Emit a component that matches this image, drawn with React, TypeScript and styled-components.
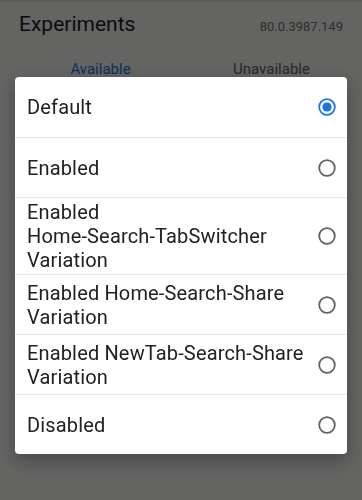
import React, { useState } from "react";
import styled, { createGlobalStyle } from "styled-components";

const GlobalStyle = createGlobalStyle`
  html, body {
    margin: 0;
    padding: 0;
    height: 100%;
  }
  body {
    font-family: Roboto, "Noto Sans", "Liberation Sans", sans-serif;
    background: #f9fcf8;
    overflow: hidden;
  }
`;

const Page = styled.div`
  width: 362px;
  height: 500px;
  background: #f9fcf8;
  border-top: 2px solid #e4e6e2;
  box-sizing: border-box;
`;

const Header = styled.header`
  display: flex;
  justify-content: space-between;
  align-items: baseline;
  padding: 10px 19px 0 19px;
`;

const Title = styled.h1`
  margin: 0;
  font-size: 21px;
  font-weight: 400;
  color: #202124;
`;

const Version = styled.span`
  font-size: 13px;
  color: #757575;
`;

const Tabs = styled.div`
  display: grid;
  grid-template-columns: 1fr 1fr;
  margin-top: 24px;
`;

const Tab = styled.div<{ $active?: boolean }>`
  text-align: center;
  font-size: 15px;
  color: ${({ $active }) => ($active ? "#1a73e8" : "#5f6368")};
  padding-left: ${({ $active }) => ($active ? "20px" : "0")};
`;

const Scrim = styled.div`
  position: fixed;
  inset: 0;
  background: rgba(0, 0, 0, 0.6);
`;

const Dialog = styled.div`
  position: fixed;
  top: 77px;
  left: 15px;
  width: 332px;
  background: #ffffff;
  border-radius: 4px;
  box-shadow: 0 6px 18px rgba(0, 0, 0, 0.35);
  overflow: hidden;
`;

const Row = styled.div<{ $tall?: boolean }>`
  display: flex;
  align-items: center;
  justify-content: space-between;
  gap: 10px;
  box-sizing: border-box;
  min-height: ${({ $tall }) => ($tall ? "76px" : "60px")};
  padding: 2px 10px 2px 12px;
  cursor: pointer;

  & + & {
    border-top: 1px solid #e8e8e8;
  }
`;

const Label = styled.span`
  font-size: 20px;
  line-height: 24px;
  letter-spacing: 0.15px;
  color: #212121;
`;

const Word = styled.span`
  white-space: nowrap;
`;

const RadioIcon = ({ checked }: { checked: boolean }) => (
  <svg width="20" height="20" viewBox="0 0 20 20" style={{ flexShrink: 0 }}>
    <circle
      cx="10"
      cy="10"
      r="7.8"
      fill="none"
      stroke={checked ? "#1a73e8" : "#5f6368"}
      strokeWidth="1.8"
    />
    {checked && <circle cx="10" cy="10" r="4.6" fill="#1a73e8" />}
  </svg>
);

const options = [
  "Default",
  "Enabled",
  "Enabled Home-Search-TabSwitcher Variation",
  "Enabled Home-Search-Share Variation",
  "Enabled NewTab-Search-Share Variation",
  "Disabled",
];

const App = () => {
  const [selected, setSelected] = useState(0);

  return (
    <>
      <GlobalStyle />
      <Page>
        <Header>
          <Title>Experiments</Title>
          <Version>80.0.3987.149</Version>
        </Header>
        <Tabs>
          <Tab $active>Available</Tab>
          <Tab>Unavailable</Tab>
        </Tabs>
      </Page>
      <Scrim />
      <Dialog>
        {options.map((option, i) => (
          <Row key={option} $tall={i === 2} onClick={() => setSelected(i)}>
            <Label>
              {option.split(" ").map((word, j) => (
                <React.Fragment key={j}>
                  {j > 0 && " "}
                  <Word>{word}</Word>
                </React.Fragment>
              ))}
            </Label>
            <RadioIcon checked={selected === i} />
          </Row>
        ))}
      </Dialog>
    </>
  );
};

export default App;
